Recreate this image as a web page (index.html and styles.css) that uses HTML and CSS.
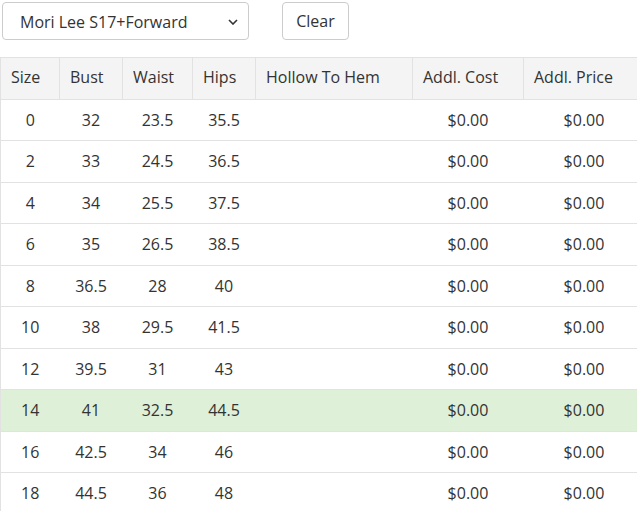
FILE: index.html
```html
<!DOCTYPE html>
<html>
<head>
<meta charset="utf-8">
<link rel="stylesheet" href="styles.css">
</head>
<body>
<div class="toolbar">
  <div class="select-wrap">
    <select class="select">
      <option>Mori Lee S17+Forward</option>
    </select>
    <svg class="chev" width="10" height="6" viewBox="0 0 10 6"><path d="M1 1 L5 5 L9 1" fill="none" stroke="#333" stroke-width="1.6"/></svg>
  </div>
  <button class="btn">Clear</button>
</div>
<table class="sizes">
  <colgroup>
    <col class="c-size"><col class="c-bust"><col class="c-waist"><col class="c-hips"><col class="c-hollow"><col class="c-cost"><col class="c-price">
  </colgroup>
  <thead>
    <tr><th>Size</th><th>Bust</th><th>Waist</th><th>Hips</th><th>Hollow To Hem</th><th>Addl. Cost</th><th>Addl. Price</th></tr>
  </thead>
  <tbody>
    <tr><td>0</td><td>32</td><td>23.5</td><td>35.5</td><td></td><td>$0.00</td><td>$0.00</td></tr>
    <tr><td>2</td><td>33</td><td>24.5</td><td>36.5</td><td></td><td>$0.00</td><td>$0.00</td></tr>
    <tr><td>4</td><td>34</td><td>25.5</td><td>37.5</td><td></td><td>$0.00</td><td>$0.00</td></tr>
    <tr><td>6</td><td>35</td><td>26.5</td><td>38.5</td><td></td><td>$0.00</td><td>$0.00</td></tr>
    <tr><td>8</td><td>36.5</td><td>28</td><td>40</td><td></td><td>$0.00</td><td>$0.00</td></tr>
    <tr><td>10</td><td>38</td><td>29.5</td><td>41.5</td><td></td><td>$0.00</td><td>$0.00</td></tr>
    <tr><td>12</td><td>39.5</td><td>31</td><td>43</td><td></td><td>$0.00</td><td>$0.00</td></tr>
    <tr class="current"><td>14</td><td>41</td><td>32.5</td><td>44.5</td><td></td><td>$0.00</td><td>$0.00</td></tr>
    <tr><td>16</td><td>42.5</td><td>34</td><td>46</td><td></td><td>$0.00</td><td>$0.00</td></tr>
    <tr><td>18</td><td>44.5</td><td>36</td><td>48</td><td></td><td>$0.00</td><td>$0.00</td></tr>
  </tbody>
</table>
</body>
</html>
```
FILE: styles.css
```css
html, body {
  margin: 0;
  padding: 0;
  overflow: hidden;
  background: #fff;
}
body {
  font-family: "Open Sans", "Liberation Sans", sans-serif;
  font-size: 16px;
  color: #333;
}
.toolbar {
  display: flex;
  align-items: center;
  gap: 33px;
  padding: 2px 0 0 2px;
  height: 38px;
  margin-bottom: 17px;
}
.select-wrap {
  position: relative;
  width: 247px;
  height: 38px;
}
.select {
  appearance: none;
  -webkit-appearance: none;
  width: 100%;
  height: 38px;
  box-sizing: border-box;
  border: 1px solid #ccc;
  border-radius: 4px;
  background: #fff;
  padding: 2px 0 0 17px;
  font-family: "Open Sans", "Liberation Sans", sans-serif;
  font-size: 16px;
  color: #333;
}
.chev {
  position: absolute;
  right: 11px;
  top: 17px;
  pointer-events: none;
}
.btn {
  width: 67px;
  height: 38px;
  box-sizing: border-box;
  border: 1px solid #ccc;
  border-radius: 4px;
  background: #fff;
  font-family: "Open Sans", "Liberation Sans", sans-serif;
  font-size: 16px;
  color: #333;
  padding: 0 0 1px;
}
.sizes {
  border-collapse: collapse;
  table-layout: fixed;
  width: 644px;
  border-left: 1px solid #e2e2e2;
}
.c-size { width: 59px; }
.c-bust { width: 63px; }
.c-waist { width: 70px; }
.c-hips { width: 63px; }
.c-hollow { width: 157px; }
.c-cost { width: 111px; }
.c-price { width: 121px; }
.sizes th {
  background: #f4f4f4;
  border: 1px solid #e2e2e2;
  font-weight: 400;
  text-align: left;
  padding: 7px 8px 9.5px 10px;
  line-height: 24px;
  white-space: nowrap;
}
.sizes td {
  border-top: 1px solid #e2e2e2;
  text-align: center;
  padding: 8.25px 4px;
  line-height: 24px;
}
.sizes tr.current td {
  background: #dff0d8;
}
```
